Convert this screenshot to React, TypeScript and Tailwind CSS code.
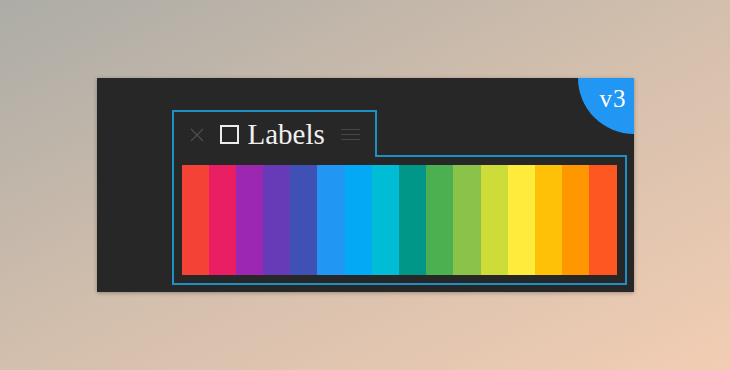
const stripes = [
  "#F44336",
  "#E91E63",
  "#9C27B0",
  "#673AB7",
  "#3F51B5",
  "#2196F3",
  "#03A9F4",
  "#00BCD4",
  "#009688",
  "#4CAF50",
  "#8BC34A",
  "#CDDC39",
  "#FFEB3B",
  "#FFC107",
  "#FF9800",
  "#FF5722",
];

export default function App() {
  return (
    <div className="w-[730px] h-[370px] flex items-center justify-center bg-gradient-to-br from-[#acaca6] via-[#d3bfad] to-[#f2cdb3]">
      <div className="relative w-[537px] h-[214px] bg-[#272727] overflow-hidden shadow-[0_1px_4px_rgba(0,0,0,0.3)] pt-[32px] pl-[75px] pr-[7px]">
        {/* version badge */}
        <div className="absolute -right-[56px] -top-[56px] w-[112px] h-[112px] rounded-full bg-[#2196F3]" />
        <div className="absolute right-[7px] top-[5px] text-[25px] tracking-[1px] text-white font-['Liberation_Serif',serif] leading-[32px]">
          v3
        </div>

        <div className="flex flex-col">
          {/* tab */}
          <div className="relative z-10 w-[205px] h-[47px] -mb-[2px] border-2 border-b-0 border-[#1f8fc4] bg-[#272727] flex items-center pl-[16px] pr-[15px]">
            <svg width="14" height="14" viewBox="0 0 14 14" className="shrink-0">
              <path d="M1 1 L13 13 M13 1 L1 13" stroke="#4d4d4d" strokeWidth="1.3" />
            </svg>
            <div className="ml-[16px] w-[19px] h-[19px] border-2 border-[#ececec] shrink-0" />
            <span className="ml-[9px] text-[29px] leading-none text-[#f0f0f0] font-['Liberation_Serif',serif]">
              Labels
            </span>
            <div className="ml-auto flex flex-col gap-[4px] w-[19px]">
              <div className="h-px bg-[#474747]" />
              <div className="h-px bg-[#474747]" />
              <div className="h-px bg-[#474747]" />
            </div>
          </div>
          {/* box */}
          <div className="h-[130px] border-2 border-[#1f8fc4] p-[8px]">
            <div className="flex h-full">
              {stripes.map((c) => (
                <div key={c} className="flex-1" style={{ backgroundColor: c }} />
              ))}
            </div>
          </div>
        </div>
      </div>
    </div>
  );
}
